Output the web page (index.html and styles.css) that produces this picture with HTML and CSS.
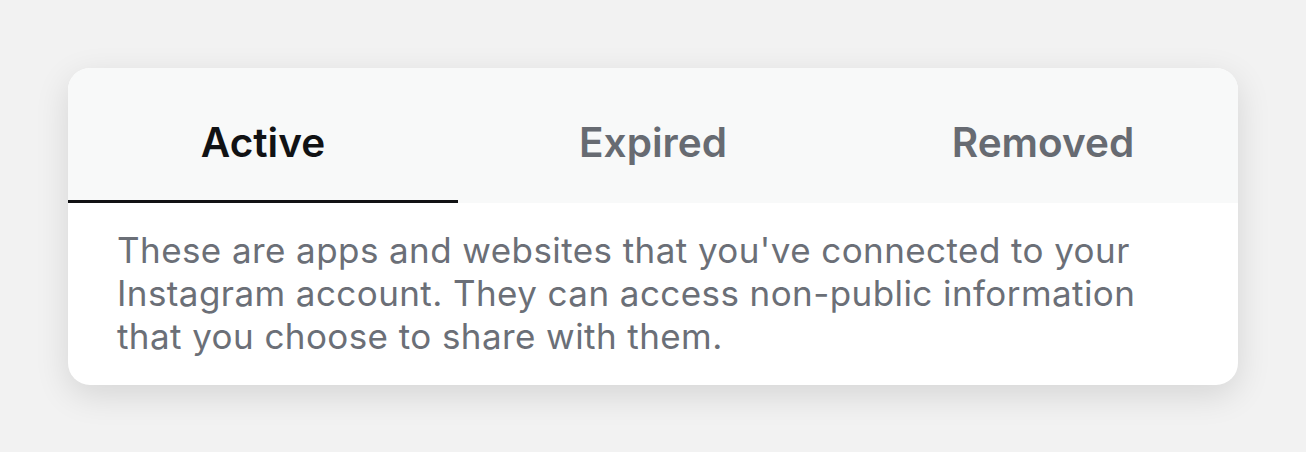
FILE: index.html
```
<!DOCTYPE html>
<html lang="en">
<head>
<meta charset="utf-8">
<title>Apps and Websites</title>
<link rel="stylesheet" href="styles.css">
</head>
<body>
<main class="stage">
  <section class="card">
    <nav class="tabs">
      <div class="tab tab-active">Active</div>
      <div class="tab">Expired</div>
      <div class="tab">Removed</div>
    </nav>
    <p class="desc">These are apps and websites that you've connected to your Instagram account. They can access non-public information that you choose to share with them.</p>
  </section>
</main>
</body>
</html>
```
FILE: styles.css
```
html, body {
  margin: 0;
  padding: 0;
}
body {
  background: #f2f2f2;
  font-family: "Inter", "Liberation Sans", sans-serif;
  width: 1306px;
  height: 452px;
  overflow: hidden;
}
.stage {
  padding: 68px 68px 0 68px;
}
.card {
  width: 1170px;
  background: #ffffff;
  border-radius: 22px;
  overflow: hidden;
  box-shadow: 0 10px 34px rgba(0, 0, 0, 0.12);
}
.tabs {
  display: grid;
  grid-template-columns: repeat(3, 1fr);
  background: #f8f9f9;
  height: 135px;
}
.tab {
  display: flex;
  align-items: center;
  justify-content: center;
  padding-top: 16px;
  box-sizing: border-box;
  font-size: 40.5px;
  font-weight: 600;
  color: #676b72;
  border-bottom: 3px solid transparent;
}
.tab-active {
  color: #111214;
  border-bottom-color: #111214;
}
.desc {
  margin: 0;
  padding: 26px 80px 27px 49px;
  font-size: 35px;
  letter-spacing: 0.42px;
  line-height: 43px;
  color: #6b6f77;
}
```
